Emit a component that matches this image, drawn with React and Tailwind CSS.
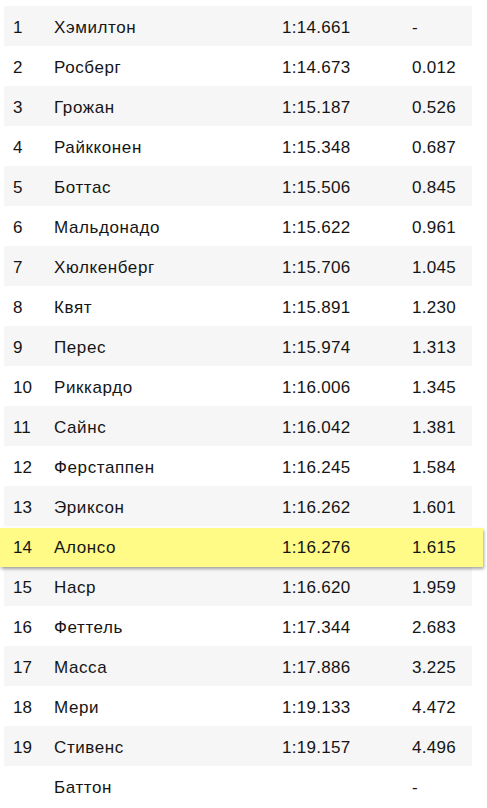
import React from "react";

const results = [
    { pos: "1", name: "Хэмилтон", time: "1:14.661", gap: "-" },
    { pos: "2", name: "Росберг", time: "1:14.673", gap: "0.012" },
    { pos: "3", name: "Грожан", time: "1:15.187", gap: "0.526" },
    { pos: "4", name: "Райкконен", time: "1:15.348", gap: "0.687" },
    { pos: "5", name: "Боттас", time: "1:15.506", gap: "0.845" },
    { pos: "6", name: "Мальдонадо", time: "1:15.622", gap: "0.961" },
    { pos: "7", name: "Хюлкенберг", time: "1:15.706", gap: "1.045" },
    { pos: "8", name: "Квят", time: "1:15.891", gap: "1.230" },
    { pos: "9", name: "Перес", time: "1:15.974", gap: "1.313" },
    { pos: "10", name: "Риккардо", time: "1:16.006", gap: "1.345" },
    { pos: "11", name: "Сайнс", time: "1:16.042", gap: "1.381" },
    { pos: "12", name: "Ферстаппен", time: "1:16.245", gap: "1.584" },
    { pos: "13", name: "Эриксон", time: "1:16.262", gap: "1.601" },
    { pos: "14", name: "Алонсо", time: "1:16.276", gap: "1.615", highlight: true },
    { pos: "15", name: "Наср", time: "1:16.620", gap: "1.959" },
    { pos: "16", name: "Феттель", time: "1:17.344", gap: "2.683" },
    { pos: "17", name: "Масса", time: "1:17.886", gap: "3.225" },
    { pos: "18", name: "Мери", time: "1:19.133", gap: "4.472" },
    { pos: "19", name: "Стивенс", time: "1:19.157", gap: "4.496" },
    { pos: "", name: "Баттон", time: "", gap: "-" },
];

const Cells = ({ row }) => <>
    <span className="w-[41px] shrink-0">{row.pos}</span>
    <span className="w-[228px] shrink-0 tracking-[0.6px]">{row.name}</span>
    <span className="w-[130px] shrink-0 tracking-[0.3px]">{row.time}</span>
    <span className="tracking-[0.3px]">{row.gap}</span>
</>;

const App = () => {
    return <div className="min-h-[808px] bg-white pt-[6px] pl-[4px] font-['Liberation_Sans',Arial,sans-serif] text-[17px] text-[#151515]">
        {/* Qualifying table - Starts Here */}
        <div className="w-[468px] flex flex-col">
            {results.map((row, index) => {
                if (row.highlight) {
                    return <div className="relative z-10 h-[40px]" key={`row-${index}`}>
                        <div className="-ml-[4px] mt-[2px] w-[483px] h-[39px] flex items-center pt-[1px] pl-[13px] bg-[#fffb86] shadow-[1px_2px_3px_rgba(0,0,0,0.35)]">
                            <Cells row={row} />
                        </div>
                    </div>;
                }
                return <div
                    className={`h-[40px] flex items-center pt-[4px] pl-[9px] ${index % 2 === 0 ? "bg-[#f6f6f6]" : "bg-white"}`}
                    key={`row-${index}`}
                >
                    <Cells row={row} />
                </div>;
            })}
        </div>
        {/* Qualifying table - Ends Here */}
    </div>;
};

export default App;
